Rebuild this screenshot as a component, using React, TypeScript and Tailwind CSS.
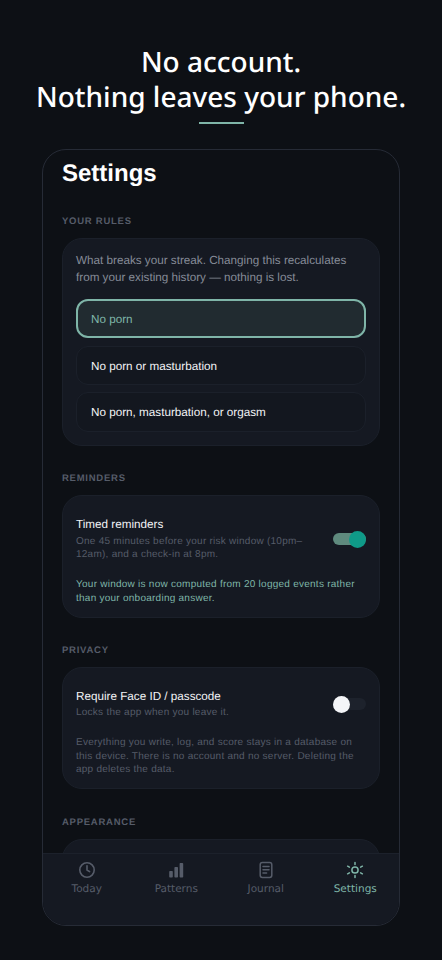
import { ReactNode } from "react";

const sans = "font-['Liberation_Sans',Arial,sans-serif]";

function SectionLabel({ children }: { children: ReactNode }) {
  return (
    <div className="mb-[10px] pt-px text-[9.5px] leading-[12px] font-bold tracking-[0.75px] text-[#565c69]">
      {children}
    </div>
  );
}

function Card({ children }: { children: ReactNode }) {
  return (
    <div className="rounded-[20px] border border-[#1b202a] bg-[#151922] px-[13px] pt-[13px] pb-[11px]">
      {children}
    </div>
  );
}

function Rule({ label, active }: { label: string; active?: boolean }) {
  return (
    <div
      className={
        active
          ? "flex h-[39.3px] items-center rounded-[12px] border-2 border-[#7fb5a8] bg-[#212b30] px-[13px] pt-[2px] text-[11.7px] text-[#7fb5a8]"
          : "flex h-[39.3px] items-center rounded-[12px] border border-[#1b202a] bg-[#13171f] px-[14px] pt-[2px] text-[11.7px] text-[#f2f3f5]"
      }
    >
      {label}
    </div>
  );
}

function Toggle({ on }: { on?: boolean }) {
  return (
    <div
      className={
        "flex h-3 w-[33px] shrink-0 items-center rounded-full " +
        (on ? "justify-end bg-[#5f8a7e]" : "justify-start bg-[#1d222c]")
      }
    >
      <div
        className={
          "size-[17px] rounded-full " + (on ? "bg-[#0f9a88]" : "bg-[#f4f5f8]")
        }
      />
    </div>
  );
}

function ClockIcon() {
  return (
    <svg width="18" height="18" viewBox="0 0 18 18" fill="none" stroke="currentColor" strokeWidth="1.6" strokeLinecap="round" strokeLinejoin="round">
      <circle cx="9" cy="9" r="7.2" />
      <path d="M9 4.8V9l2.6 1.6" />
    </svg>
  );
}

function BarsIcon() {
  return (
    <svg width="18" height="18" viewBox="0 0 18 18" fill="currentColor">
      <rect x="2.2" y="10" width="3.6" height="6.5" rx="0.8" />
      <rect x="7.4" y="6" width="3.6" height="10.5" rx="0.8" />
      <rect x="12.6" y="2" width="3.6" height="14.5" rx="0.8" />
    </svg>
  );
}

function JournalIcon() {
  return (
    <svg width="18" height="18" viewBox="0 0 18 18" fill="none" stroke="currentColor" strokeWidth="1.5" strokeLinecap="round">
      <rect x="3.2" y="1.6" width="11.6" height="14.8" rx="2.2" />
      <path d="M6 5.6h6M6 8.8h6M6 12h3.6" />
    </svg>
  );
}

function SunIcon() {
  return (
    <svg width="18" height="18" viewBox="0 0 18 18" fill="none" stroke="currentColor" strokeWidth="1.5" strokeLinecap="round">
      <circle cx="9" cy="9" r="3.1" />
      <path d="M9 1.4v2M9 14.6v2M1.6 5.2l1.8 1M14.6 11.8l1.8 1M1.6 12.8l1.8-1M14.6 6.2l1.8-1" />
    </svg>
  );
}

const tabs = [
  { label: "Today", icon: <ClockIcon /> },
  { label: "Patterns", icon: <BarsIcon /> },
  { label: "Journal", icon: <JournalIcon /> },
  { label: "Settings", icon: <SunIcon />, active: true },
];

export default function App() {
  return (
    <div className={`h-[960px] w-[442px] overflow-hidden bg-[#0d1015] [text-rendering:geometricPrecision] ${sans}`}>
      <div className="pt-[45px] text-center font-['Noto_Sans',sans-serif] text-[28px] leading-[35px] font-medium text-white">
        <div>No account.</div>
        <div>Nothing leaves your phone.</div>
      </div>
      <div className="mx-auto mt-[7px] h-[2px] w-[45px] bg-[#7fb5a8]" />

      <div className="mx-auto mt-[25px] flex h-[777px] w-[358px] flex-col overflow-hidden rounded-[24px] border border-[#262b36]">
        <div className="min-h-0 flex-1 overflow-hidden px-[19px]">
          <h1 className="mt-[8px] text-[24px] leading-[32px] font-bold text-white">Settings</h1>

          <div className="mt-[25px]">
            <SectionLabel>YOUR RULES</SectionLabel>
            <Card>
              <p className="text-[11.7px] leading-[17px] text-[#858b97]">
                What breaks your streak. Changing this recalculates from your existing history — nothing is lost.
              </p>
              <div className="mt-[13px] flex flex-col gap-[7.4px] pb-[2px]">
                <Rule label="No porn" active />
                <Rule label="No porn or masturbation" />
                <Rule label="No porn, masturbation, or orgasm" />
              </div>
            </Card>
          </div>

          <div className="mt-[26px]">
            <SectionLabel>REMINDERS</SectionLabel>
            <Card>
              <div className="flex items-center justify-between pt-[8px]">
                <div className="w-[240px]">
                  <div className="mb-[2px] text-[11.7px] leading-[16px] text-[#f2f3f5]">Timed reminders</div>
                  <div className="text-[10px] leading-[13.5px] tracking-[0.25px] text-[#565c69]">
                    One 45 minutes before your risk window (10pm–12am), and a check-in at 8pm.
                  </div>
                </div>
                <Toggle on />
              </div>
              <p className="mt-[16px] text-[10px] leading-[14px] tracking-[0.25px] text-[#7fb5a8]">
                Your window is now computed from 20 logged events rather than your onboarding answer.
              </p>
            </Card>
          </div>

          <div className="mt-[26px]">
            <SectionLabel>PRIVACY</SectionLabel>
            <Card>
              <div className="flex items-center justify-between pt-[8px]">
                <div>
                  <div className="mb-[1.5px] text-[11.7px] leading-[16px] text-[#f2f3f5]">Require Face ID / passcode</div>
                  <div className="text-[10px] leading-[13.5px] tracking-[0.25px] text-[#565c69]">
                    Locks the app when you leave it.
                  </div>
                </div>
                <Toggle />
              </div>
              <p className="mt-[16.5px] text-[10px] leading-[13.5px] tracking-[0.25px] text-[#565c69]">
                Everything you write, log, and score stays in a database on this device. There is no account and no server. Deleting the app deletes the data.
              </p>
            </Card>
          </div>

          <div className="mt-[27px]">
            <SectionLabel>APPEARANCE</SectionLabel>
            <Card>
              <div className="h-20" />
            </Card>
          </div>
        </div>

        <nav className="flex h-[72px] shrink-0 justify-center border-t border-[#1c212b] bg-[#151922] pt-[7px] font-['DejaVu_Sans',sans-serif]">
          {tabs.map((tab) => (
            <div
              key={tab.label}
              className={
                "flex w-[89.5px] shrink-0 flex-col items-center gap-[1.5px] text-[10.5px] leading-[16px] " +
                (tab.active ? "text-[#7fb5a8]" : "text-[#565c69]")
              }
            >
              {tab.icon}
              <span>{tab.label}</span>
            </div>
          ))}
        </nav>
      </div>
    </div>
  );
}
